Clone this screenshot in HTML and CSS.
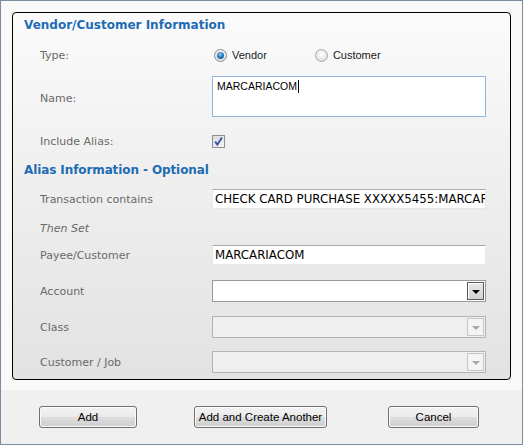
FILE: index.html
```html
<!DOCTYPE html>
<html>
<head>
<meta charset="utf-8">
<link rel="stylesheet" href="styles.css">
</head>
<body>
<div class="window">
  <div class="content">
    <div class="panel">
      <div class="heading h-first">Vendor/Customer Information</div>

      <div class="row r-type">
        <div class="label">Type:</div>
        <div class="control radios">
          <span class="radio checked"></span><span class="rlabel">Vendor</span>
          <span class="radio r2"></span><span class="rlabel">Customer</span>
        </div>
      </div>

      <div class="row r-name">
        <div class="label">Name:</div>
        <div class="control textarea"><span class="ta-text">MARCARIACOM</span><span class="caret"></span></div>
      </div>

      <div class="row r-include">
        <div class="label">Include Alias:</div>
        <div class="control">
          <span class="checkbox">
            <svg width="11" height="11" viewBox="0 0 11 11"><path d="M2.2 5.6 L4.4 8.6 L9 1.6" fill="none" stroke="#3a51a8" stroke-width="1.8"/></svg>
          </span>
        </div>
      </div>

      <div class="heading h-alias">Alias Information - Optional</div>

      <div class="row r-trans">
        <div class="label">Transaction contains</div>
        <div class="control input">CHECK CARD PURCHASE XXXXX5455:MARCARIACOM</div>
      </div>

      <div class="row r-then">
        <div class="label italic">Then Set</div>
      </div>

      <div class="row r-payee">
        <div class="label">Payee/Customer</div>
        <div class="control input">MARCARIACOM</div>
      </div>

      <div class="row r-account">
        <div class="label">Account</div>
        <div class="control combo"><span class="dd"><span class="tri"></span></span></div>
      </div>

      <div class="row r-class">
        <div class="label">Class</div>
        <div class="control combo disabled"><span class="dd"><span class="tri"></span></span></div>
      </div>

      <div class="row r-job">
        <div class="label">Customer / Job</div>
        <div class="control combo disabled"><span class="dd"><span class="tri"></span></span></div>
      </div>
    </div>
  </div>
  <div class="footer">
    <button class="btn b-add">Add</button>
    <button class="btn b-another">Add and Create Another</button>
    <button class="btn b-cancel">Cancel</button>
  </div>
</div>
</body>
</html>
```

FILE: styles.css
```css
html, body {
  margin: 0;
  padding: 0;
  background: #ffffff;
}

.window {
  width: 523px;
  height: 445px;
  box-sizing: border-box;
  border: 1px solid #7a8aa0;
  box-shadow: inset 0 0 0 1px #dfe5ee;
  display: flex;
  flex-direction: column;
  background: #f0f0f0;
  font-family: "DejaVu Sans", Verdana, sans-serif;
}

.content {
  background: #f9f9f9;
  padding: 11px 11px 10px 11px;
}

.panel {
  width: 499px;
  height: 368px;
  box-sizing: border-box;
  border: 1px solid #000;
  border-radius: 4px;
  background: linear-gradient(to bottom, #fbfbfb 0%, #efefef 45%, #e2e2e2 100%);
  padding: 0 0 0 11px;
}

.heading {
  font-weight: bold;
  font-size: 12px;
  color: #1d6cb4;
  height: 21px;
  line-height: 21px;
}
.h-first { margin-top: 2px; }
.h-alias { margin-top: 9px; height: 20px; line-height: 20px; letter-spacing: -0.1px; }

.row {
  display: flex;
  align-items: center;
  padding-left: 16px;
  height: 20px;
}

.label {
  width: 172px;
  flex: none;
  font-size: 11px;
  color: #696969;
}
.label.italic { font-style: italic; }

.control {
  width: 274px;
  box-sizing: border-box;
  flex: none;
}

.r-type { margin-top: 9px; }
.r-name { margin-top: 11px; height: 41px; }
.r-name .label { padding-top: 4px; }
.r-include { margin-top: 14px; }
.r-trans { margin-top: 9px; }
.r-then { margin-top: 9px; }
.r-payee { margin-top: 7px; }
.r-account { margin-top: 15px; height: 22px; }
.r-class { margin-top: 14px; height: 22px; }
.r-job { margin-top: 13px; height: 22px; }

/* radios */
.radios {
  display: flex;
  align-items: center;
  font-family: "Liberation Sans", Arial, sans-serif;
  font-size: 11px;
  color: #1a1a1a;
  padding-left: 2px;
}
.radio {
  width: 13px;
  height: 13px;
  box-sizing: border-box;
  border-radius: 50%;
  border: 1px solid #8c8e90;
  background: radial-gradient(circle at 50% 40%, #ffffff 0%, #e6e6e6 60%, #cfcfcf 100%);
  position: relative;
  flex: none;
}
.radio.checked::after {
  content: "";
  position: absolute;
  left: 2px;
  top: 2px;
  width: 7px;
  height: 7px;
  border-radius: 50%;
  background: radial-gradient(circle at 45% 35%, #8ad0f5 0%, #2b7fc4 45%, #0d3f7a 100%);
}
.radio.r2 {
  margin-left: 48px;
  border-color: #a6a8aa;
}
.rlabel { margin-left: 5px; }

/* textarea */
.textarea {
  height: 41px;
  border: 1px solid #8fb6dc;
  background: #fff;
  font-family: "Liberation Sans", Arial, sans-serif;
  font-size: 10.5px;
  color: #000;
  padding: 3px 0 0 4px;
  align-self: flex-start;
  display: flex;
  align-items: flex-start;
}
.caret {
  display: inline-block;
  width: 1px;
  height: 13px;
  background: #000;
  margin-left: 1px;
}

/* checkbox */
.checkbox {
  display: flex;
  align-items: center;
  justify-content: center;
  width: 13px;
  height: 13px;
  box-sizing: border-box;
  border: 1px solid #8e8f8f;
  background: linear-gradient(135deg, #dcdcdc 0%, #f4f4f4 100%);
}

/* inputs */
.input {
  height: 20px;
  background: #fff;
  border: 1px solid #e3e6ea;
  border-top-color: #a9abae;
  font-size: 11.8px;
  color: #000;
  padding: 0 0 0 2px;
  line-height: 18px;
  white-space: nowrap;
  overflow: hidden;
}

/* combos */
.combo {
  height: 22px;
  background: #fff;
  border: 1px solid #9a9a9a;
  display: flex;
  justify-content: flex-end;
  align-items: center;
  padding-right: 1px;
}
.dd {
  width: 17px;
  height: 18px;
  box-sizing: border-box;
  border: 1px solid #5a5a5a;
  box-shadow: inset 1px 1px 0 #ffffff;
  background: linear-gradient(to bottom, #e8e8e8, #d2d2d2);
  display: flex;
  align-items: center;
  justify-content: center;
}
.tri {
  width: 0;
  height: 0;
  border-left: 4px solid transparent;
  border-right: 4px solid transparent;
  border-top: 4px solid #000;
  margin-top: 1px;
}
.combo.disabled {
  background: #efefef;
  border-color: #b3b3b3;
}
.combo.disabled .dd {
  border-color: #c6c6c6;
  background: #f4f4f4;
  box-shadow: none;
}
.combo.disabled .tri {
  border-top-color: #a8a8a8;
}

/* footer */
.footer {
  flex: 1;
  display: flex;
  align-items: flex-start;
  padding: 16px 0 0 38px;
  background: #f0f0f0;
}
.btn {
  height: 22px;
  box-sizing: border-box;
  border: 1px solid #707070;
  border-radius: 3px;
  background: linear-gradient(to bottom, #f2f2f2 0%, #ebebeb 50%, #dddddd 51%, #cfcfcf 100%);
  box-shadow: inset 0 0 0 1px #fbfbfb;
  font-family: "Liberation Sans", Arial, sans-serif;
  font-size: 11.5px;
  color: #000;
  padding: 0;
  margin: 0;
}
.b-add { width: 98px; }
.b-another { width: 133px; margin-left: 57px; }
.b-cancel { width: 91px; margin-left: 61px; }
```
